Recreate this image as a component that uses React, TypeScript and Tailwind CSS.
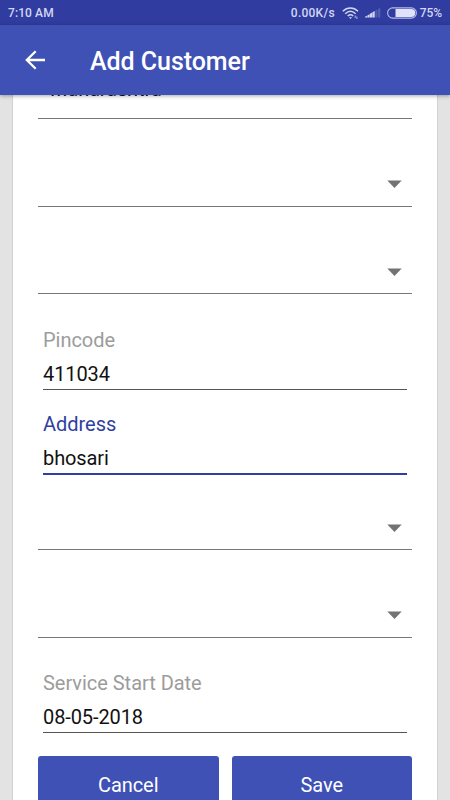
import React from "react";
import clsx from "clsx";

const Icons = {
  Back: () => (
    <svg width="22" height="22" viewBox="0 0 22 22" fill="none" stroke="#fff" strokeWidth="2.3">
      <path d="M21 11H2.8M11.700 2.200 2.800 11l8.900 8.800" />
    </svg>
  ),
  Wifi: () => (
    <svg width="18" height="14" viewBox="0 0 18 14" fill="none" stroke="#d3d7f3" strokeWidth="1.5">
      <path d="M.8 5.200C5.300.9 11.500.9 16 5.200M3.200 7.700c3.200-3 7.200-3 10.400 0M5.700 10c1.700-1.500 3.800-1.500 5.500 0" />
      <path d="M6.900 11.300h3.200l-1.600 1.700z" fill="#d3d7f3" stroke="none" />
      <path d="M13.200 9.500v2.500M14.900 10.500V13" strokeWidth="1" opacity=".8" />
    </svg>
  ),
  Signal: () => (
    <svg width="16" height="11" viewBox="0 0 16 11" fill="#d3d7f3">
      <path d="M0 10.500V9.700l2.200-1v1.800zM2.500 10.500V8.300l2.200-1.100v3.300zM5 10.500V6.700l2.200-1.200v5zM7.500 10.500V5.200l2.200-1.300v6.600z" />
      <path d="M10.300 10.500V3.700l2-1.200v8zM12.900 10.500V2.200L15.300.8v9.700z" opacity=".22" />
    </svg>
  ),
  Battery: () => (
    <svg width="30" height="12" viewBox="0 0 30 12">
      <rect x=".6" y=".9" width="28.800" height="10.200" rx="5.100" fill="none" stroke="#b4baea" strokeWidth="1.100" />
      <path d="M8.500 1.900h15.700a4.100 4.100 0 0 1 0 8.200H8.500z" fill="#dfe2f8" />
    </svg>
  ),
  Caret: () => (
    <svg width="15" height="8" viewBox="0 0 15 8" fill="#737373">
      <path d="M.3.400h14.400L7.500 7.900z" />
    </svg>
  ),
};

const Spinner = ({ className }: { className: string }) => (
  <div className={clsx("flex shrink-0 items-end justify-end border-b border-[#777] pr-[10px]", className)}>
    <Icons.Caret />
  </div>
);

type FieldProps = { label: string; value: string; focused?: boolean; className?: string };

const Field = ({ label, value, focused, className }: FieldProps) => (
  <div
    className={clsx(
      "mx-[5px] flex shrink-0 flex-col text-xl leading-6",
      focused ? "border-b-2 border-[#303f9f]" : "border-b border-[#555]",
      className
    )}
  >
    <label className={clsx("tracking-[-0.03px]", focused ? "text-[#303f9f]" : "text-[#9c9c9c]")}>{label}</label>
    <span className="mt-[10px] tracking-[-0.1px] text-[#111]">{value}</span>
  </div>
);

const App = () => (
  <div className="flex h-[800px] w-[450px] flex-col overflow-hidden bg-[#e3e3e3] font-['Roboto',sans-serif]">
    <div className="flex h-[25px] shrink-0 items-center bg-[#303c9f] pl-2 pr-[8px] text-xs font-medium text-[#d3d7f3]">
      <span className="flex-1 tracking-[0.1px]">7:10 AM</span>
      <span className="mr-[7px] tracking-[0.25px]">0.00K/s</span>
      <Icons.Wifi />
      <span className="ml-[5px] mr-[6px]"><Icons.Signal /></span>
      <Icons.Battery />
      <span className="ml-[3px] tracking-[-0.1px]">75%</span>
    </div>

    <header className="relative z-10 flex h-[70px] shrink-0 items-center bg-[#3f51b5] pl-6 shadow-[0_1px_4px_rgba(0,0,0,0.35)]">
      <button aria-label="Back"><Icons.Back /></button>
      <h1 className="ml-11 pt-[3px] text-[25px] font-medium leading-8 tracking-[-0.05px] text-white">Add Customer</h1>
    </header>

    <main className="mx-3 flex min-h-0 flex-1 flex-col overflow-hidden border-x border-[#d2d2d2] bg-white px-[25px]">
      {/* state spinner, mostly scrolled under the toolbar */}
      <div className="flex h-6 shrink-0 items-end border-b border-[#777] pb-[17px] pl-3 text-xl leading-6 tracking-[-0.1px] text-[#111]">
        Maharashtra
      </div>
      <Spinner className="h-[88px] pb-[18px]" />
      <Spinner className="h-[87px] pb-[17px]" />
      <Field label="Pincode" value="411034" className="mt-[34px] h-[62px]" />
      <Field label="Address" value="bhosari" focused className="mt-[22px] h-[63px]" />
      <Spinner className="h-[75px] pb-[17px]" />
      <Spinner className="h-[88px] pb-[18px]" />
      <Field label="Service Start Date" value="08-05-2018" className="mt-[33px] h-[62px]" />
      <div className="mt-[23px] grid shrink-0 grid-cols-2 gap-[13px]">
        <button className="h-[58px] rounded-[3px] bg-[#3f51b5] text-xl tracking-[-0.1px] text-white">Cancel</button>
        <button className="h-[58px] rounded-[3px] bg-[#3f51b5] text-xl tracking-[-0.1px] text-white">Save</button>
      </div>
    </main>
  </div>
);

export default App;
